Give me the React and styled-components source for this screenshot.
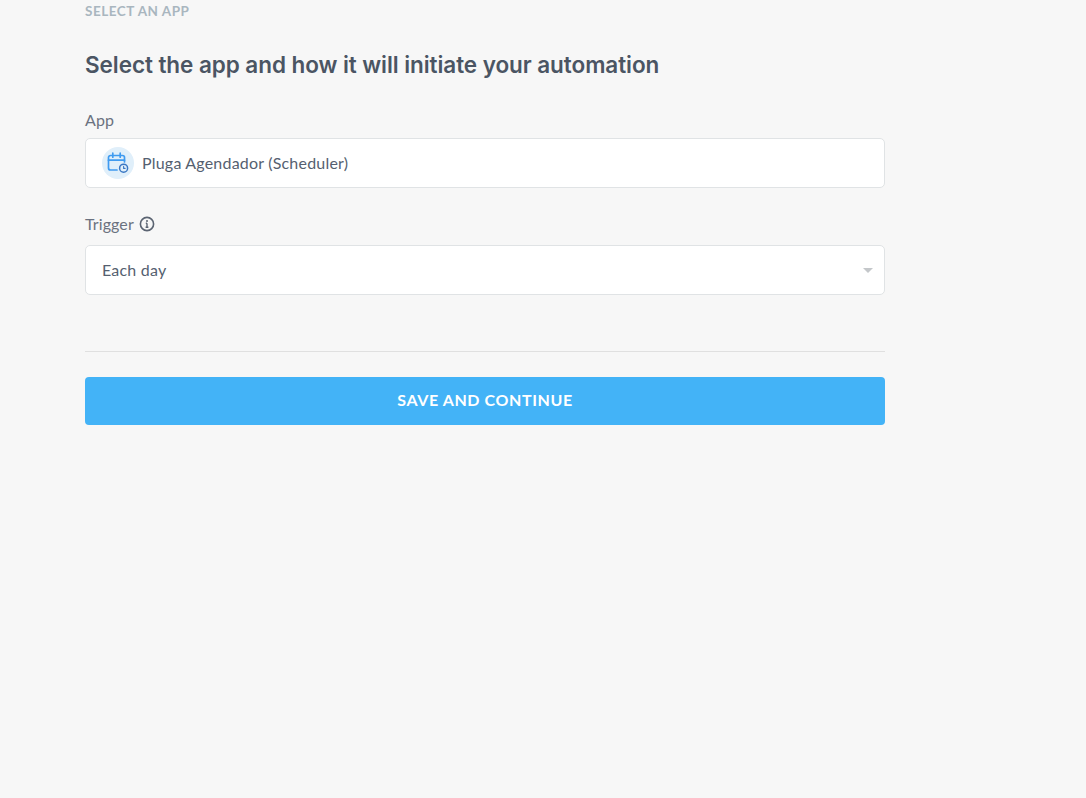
import React from "react";
import styled, { createGlobalStyle } from "styled-components";

const GlobalStyle = createGlobalStyle`
  html, body {
    margin: 0;
    padding: 0;
    height: 100%;
    background: #f7f7f7;
  }
  body {
    font-family: "Lato", "Open Sans", sans-serif;
    font-variant-ligatures: none;
    color: #4a5568;
    overflow: hidden;
  }
`;

const Page = styled.main`
  width: 800px;
  min-height: 798px;
  padding: 3px 0 0 85px;
  box-sizing: content-box;
`;

const Eyebrow = styled.div`
  font-size: 13.5px;
  line-height: 16px;
  font-weight: 700;
  letter-spacing: 0.5px;
  color: #a9b6bf;
`;

const Title = styled.h1`
  margin: 27px 0 0;
  font-family: "Inter", "Lato", sans-serif;
  font-size: 22.5px;
  line-height: 38px;
  font-weight: 600;
  letter-spacing: -0.06px;
  color: #4b5563;
`;

const Label = styled.label`
  display: flex;
  align-items: center;
  gap: 5px;
  margin-bottom: ${(p) => p.$gap}px;
  font-size: 16px;
  line-height: 20px;
  letter-spacing: 0.1px;
  color: #6b7280;
`;

const Field = styled.div`
  margin-top: ${(p) => p.$top}px;
`;

const Control = styled.div`
  display: flex;
  align-items: center;
  gap: 8px;
  height: 50px;
  box-sizing: border-box;
  padding: 0 11px 0 16px;
  background: #fff;
  border: 1px solid #e0e3e5;
  border-radius: 5px;
  font-size: 16px;
  letter-spacing: 0.2px;
  color: #555f70;
`;

const AppBadge = styled.span`
  display: flex;
  align-items: center;
  justify-content: center;
  width: 32px;
  height: 32px;
  border-radius: 50%;
  background: #e0effa;
`;

const Value = styled.span`
  flex: 1;
  padding-bottom: 1px;
`;

const Caret = styled.span`
  width: 0;
  height: 0;
  border-left: 5px solid transparent;
  border-right: 5px solid transparent;
  border-top: 5px solid #c4c7ca;
`;

const Divider = styled.hr`
  margin: 56px 0 25px;
  border: 0;
  border-top: 1px solid #e0e0e0;
`;

const SaveButton = styled.button`
  display: block;
  width: 100%;
  height: 48px;
  padding: 0 0 3px;
  border: 0;
  border-radius: 4px;
  background: #43b3f7;
  color: #fff;
  font-family: inherit;
  font-size: 16px;
  font-weight: 700;
  letter-spacing: 0.6px;
  cursor: pointer;
`;

const SchedulerIcon = () => (
  <svg width="22" height="22" viewBox="0 0 22 22" fill="none" stroke="#3f9bf0" strokeWidth="1.7" strokeLinecap="round" strokeLinejoin="round">
    <path d="M10 18H3.5a2 2 0 0 1-2-2V5.5a2 2 0 0 1 2-2h12a2 2 0 0 1 2 2V10" />
    <path d="M1.5 8.2h16" />
    <path d="M5.8 1.2v4M13.2 1.2v4" />
    <circle cx="16.6" cy="16.2" r="4" stroke="#3b78c4" strokeWidth="1.5" />
    <path d="M16.6 14.4v2h1.5" stroke="#3b78c4" strokeWidth="1.1" />
  </svg>
);

const InfoIcon = () => (
  <svg width="16" height="16" viewBox="0 0 16 16" fill="none" stroke="#5b6472" strokeWidth="1.6">
    <circle cx="8" cy="8" r="6.6" />
    <path d="M8 7.2v4M6.6 11.2h2.8M6.8 7.2H8" strokeWidth="1.4" />
    <circle cx="8" cy="4.9" r="1" fill="#5b6472" stroke="none" />
  </svg>
);

export default function App() {
  return (
    <>
      <GlobalStyle />
      <Page>
        <Eyebrow>SELECT AN APP</Eyebrow>
        <Title>Select the app and how it will initiate your automation</Title>

        <Field $top={26}>
          <Label $gap={8}>App</Label>
          <Control>
            <AppBadge>
              <SchedulerIcon />
            </AppBadge>
            <Value>Pluga Agendador (Scheduler)</Value>
          </Control>
        </Field>

        <Field $top={26}>
          <Label $gap={11}>
            Trigger <InfoIcon />
          </Label>
          <Control>
            <Value>Each day</Value>
            <Caret />
          </Control>
        </Field>

        <Divider />
        <SaveButton>SAVE AND CONTINUE</SaveButton>
      </Page>
    </>
  );
}
